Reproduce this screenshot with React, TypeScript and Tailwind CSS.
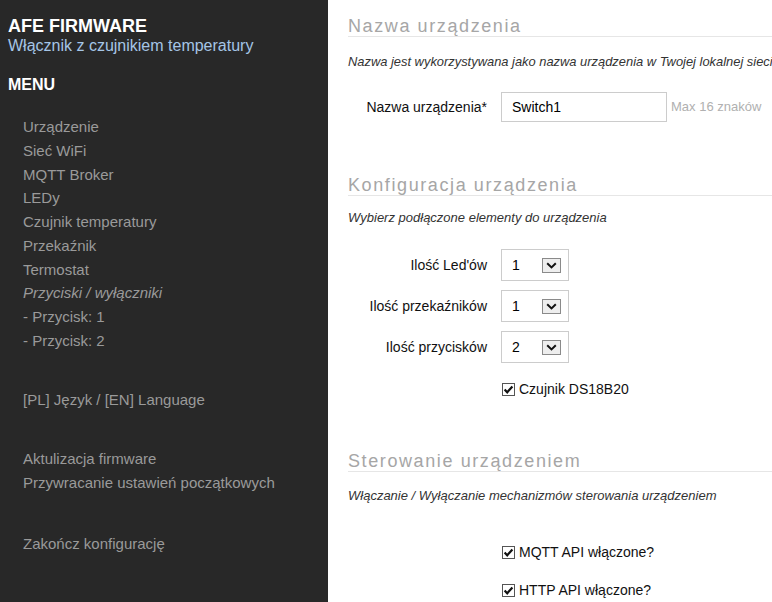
import React from "react";

const font = { fontFamily: '"Liberation Sans", Arial, sans-serif' };

/* ---------------- bits -------------- */
function Check() {
  return (
    <svg width="13" height="13" viewBox="0 0 13 13" className="shrink-0">
      <rect x="0.5" y="0.5" width="12" height="12" fill="#fff" stroke="#555" />
      <path d="M2.6 6.6 L5.2 9.3 L10.4 3.4" fill="none" stroke="#111" strokeWidth="2.2" />
    </svg>
  );
}

function Select({ value }: { value: string }) {
  return (
    <div className="w-[68px] h-[32px] border border-[#ccc] bg-white flex items-center justify-between pl-[10px] pr-[7px]">
      <span className="text-[14px] text-black">{value}</span>
      <div className="w-[19px] h-[15px] border border-[#8a8a8a] bg-[#eeeeee] flex items-center justify-center">
        <svg width="11" height="7" viewBox="0 0 11 7">
          <path d="M1.2 1.2 L5.5 5.4 L9.8 1.2" fill="none" stroke="#111" strokeWidth="2" />
        </svg>
      </div>
    </div>
  );
}

function Heading({ text, top }: { text: string; top: string }) {
  return (
    <div className={`${top} text-[18px] leading-[20px] tracking-[1.6px] text-[#a6a6a6] border-b border-[#e6e6e6]`}>
      {text}
    </div>
  );
}

function Row({ label, children, top }: { label: string; children: React.ReactNode; top: string }) {
  return (
    <div className={`${top} flex items-center`}>
      <div className="w-[139px] mr-[14px] text-right text-[14px] text-[#111]">{label}</div>
      {children}
    </div>
  );
}

function CheckRow({ label, top }: { label: string; top: string }) {
  return (
    <div className={`${top} pl-[154px] flex items-center gap-[4px] h-[13px]`}>
      <Check />
      <span className="text-[14px] text-[#111] leading-[13px]">{label}</span>
    </div>
  );
}

/* ---------------- Sidebar -------------- */
const menu = [
  "Urządzenie",
  "Sieć WiFi",
  "MQTT Broker",
  "LEDy",
  "Czujnik temperatury",
  "Przekaźnik",
  "Termostat",
];

function Sidebar() {
  return (
    <aside className="w-[328px] shrink-0 h-full bg-[#282828] pl-[8px] pt-[16px]">
      <div className="text-[18px] leading-[20px] font-bold text-white">AFE FIRMWARE</div>
      <div className="text-[16px] leading-[19px] text-[#a5c5e6]">Włącznik z czujnikiem temperatury</div>
      <div className="mt-[20px] text-[16px] leading-[19px] font-bold text-white">MENU</div>

      <ul className="mt-[21px] pl-[15px] text-[15px] leading-[23.75px] text-[#9a9a9a]">
        {menu.map((m) => (
          <li key={m}>{m}</li>
        ))}
        <li className="italic">Przyciski / wyłączniki</li>
        <li>- Przycisk: 1</li>
        <li>- Przycisk: 2</li>
        <li className="mt-[35px]">[PL] Język / [EN] Language</li>
        <li className="mt-[36px]">Aktulizacja firmware</li>
        <li>Przywracanie ustawień początkowych</li>
        <li className="mt-[37px]">Zakończ konfigurację</li>
      </ul>
    </aside>
  );
}

/* ---------------- Main -------------- */
function Main() {
  return (
    <main className="flex-1 min-w-0 h-full bg-white pl-[20px] overflow-hidden">
      <div className="w-[460px]">
        <Heading text="Nazwa urządzenia" top="mt-[16px]" />
        <p className="mt-[17px] text-[12.9px] leading-[16px] italic text-[#333] whitespace-nowrap">
          Nazwa jest wykorzystywana jako nazwa urządzenia w Twojej lokalnej sieci
        </p>
        <Row label="Nazwa urządzenia*" top="mt-[22px]">
          <div className="w-[166px] h-[30px] border border-[#ccc] flex items-center pl-[10px] text-[14px] text-black">
            Switch1
          </div>
          <span className="ml-[4px] text-[13px] text-[#b0b0b0]">Max 16 znaków</span>
        </Row>

        <Heading text="Konfiguracja urządzenia" top="mt-[53px]" />
        <p className="mt-[14px] text-[13px] leading-[16px] italic text-[#333]">
          Wybierz podłączone elementy do urządzenia
        </p>
        <Row label="Ilość Led'ów" top="mt-[23px]">
          <Select value="1" />
        </Row>
        <Row label="Ilość przekaźników" top="mt-[9px]">
          <Select value="1" />
        </Row>
        <Row label="Ilość przycisków" top="mt-[9px]">
          <Select value="2" />
        </Row>
        <CheckRow label="Czujnik DS18B20" top="mt-[20px]" />

        <Heading text="Sterowanie urządzeniem" top="mt-[55px]" />
        <p className="mt-[16px] text-[13px] leading-[16px] italic text-[#333]">
          Włączanie / Wyłączanie mechanizmów sterowania urządzeniem
        </p>
        <CheckRow label="MQTT API włączone?" top="mt-[42px]" />
        <CheckRow label="HTTP API włączone?" top="mt-[25px]" />
      </div>
    </main>
  );
}

export default function App() {
  return (
    <div style={font} className="w-[772px] h-[602px] flex overflow-hidden">
      <Sidebar />
      <Main />
    </div>
  );
}
